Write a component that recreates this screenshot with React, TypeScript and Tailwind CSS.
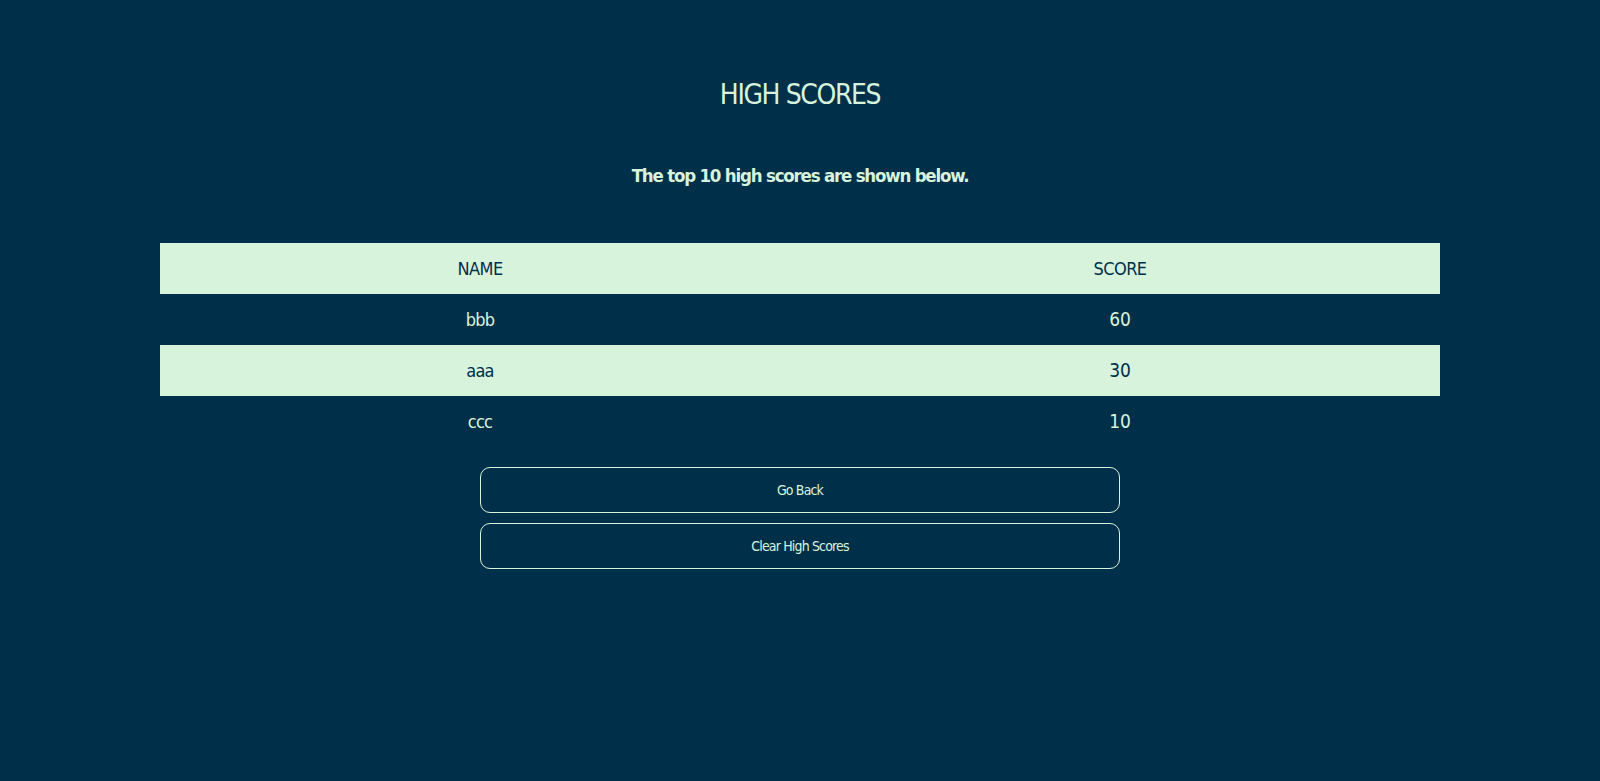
import React from "react";

type Score = { name: string; score: number };

const scores: Score[] = [
  { name: "bbb", score: 60 },
  { name: "aaa", score: 30 },
  { name: "ccc", score: 10 },
];

const font = { fontFamily: '"DejaVu Sans Condensed", "Liberation Sans", sans-serif' };

export default function App() {
  return (
    <div className="min-h-[781px] w-full bg-[#003049] text-[#d8f3dc] pt-[75px]" style={font}>
      {/* Heading */}
      <h1 className="text-center text-[28px] leading-[40px] font-normal tracking-[-0.05em]">HIGH SCORES</h1>
      <p className="mt-[45px] text-center text-[18.5px] leading-[32px] font-bold tracking-[-0.065em]">
        The top 10 high scores are shown below.
      </p>

      {/* Table */}
      <table className="mx-auto mt-[51px] w-[80%] border-collapse table-fixed">
        <thead>
          <tr className="h-[51px] bg-[#d8f3dc] text-[#003049]">
            <th className="text-[18px] font-normal text-center tracking-[-0.03em]">NAME</th>
            <th className="text-[18px] font-normal text-center tracking-[-0.03em]">SCORE</th>
          </tr>
        </thead>
        <tbody>
          {scores.map((s, i) => (
            <tr
              key={s.name}
              className={`h-[51px] ${i % 2 === 1 ? "bg-[#d8f3dc] text-[#003049]" : "text-[#d8f3dc]"}`}
            >
              <td className="text-[18px] text-center tracking-[-0.04em]">{s.name}</td>
              <td className="text-[19px] text-center">{s.score}</td>
            </tr>
          ))}
        </tbody>
      </table>

      {/* Actions */}
      <div className="mx-auto mt-[20px] flex w-[40%] flex-col gap-[10px]">
        <button className="h-[46px] w-full rounded-[10px] border border-[#d8f3dc] text-[14px] tracking-[-0.06em] text-[#d8f3dc]">
          Go Back
        </button>
        <button className="h-[46px] w-full rounded-[10px] border border-[#d8f3dc] text-[14px] tracking-[-0.06em] text-[#d8f3dc]">
          Clear High Scores
        </button>
      </div>
    </div>
  );
}
